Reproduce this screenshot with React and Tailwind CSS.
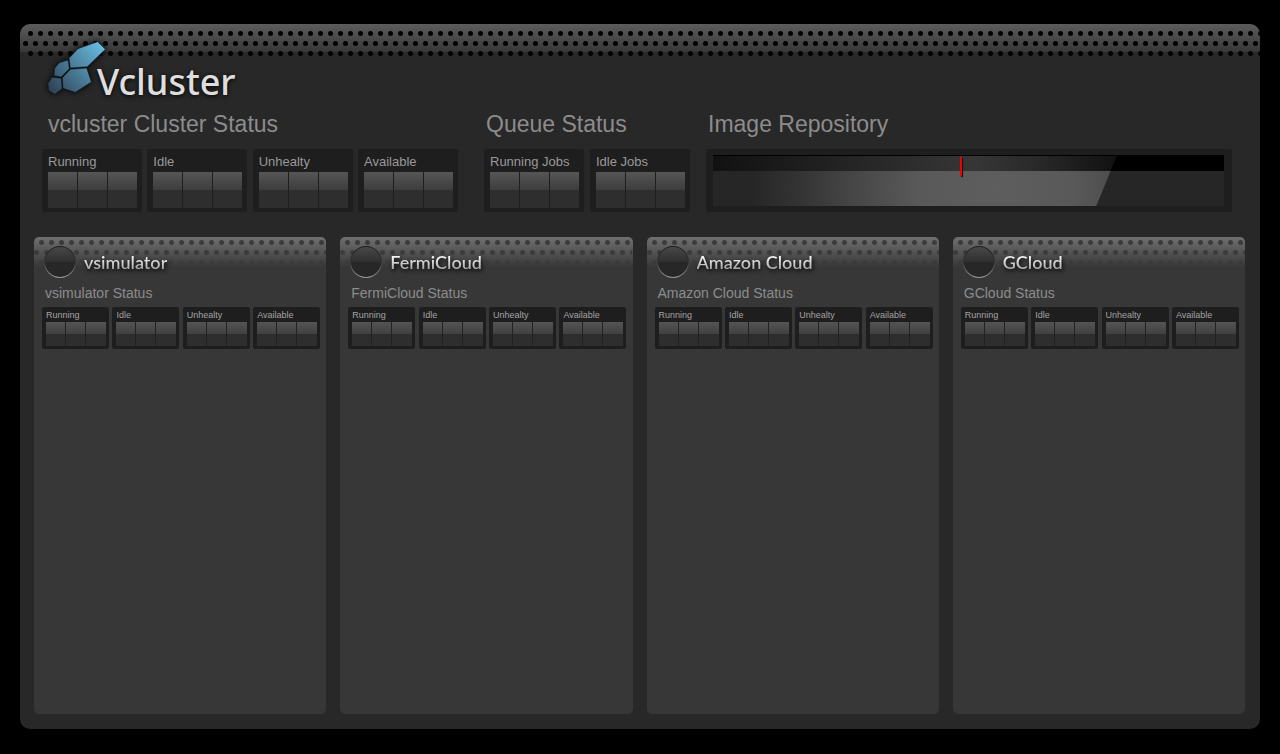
import React, { useId } from "react";

const STATES = ["Running", "Idle", "Unhealty", "Available"];
const CLOUDS = ["vsimulator", "FermiCloud", "Amazon Cloud", "GCloud"];

function FramePerforation() {
  const id = useId();
  return (
    <svg className="absolute inset-x-0 top-0 h-9 w-full" aria-hidden="true">
      <defs>
        <pattern id={id} y="5" width="10" height="20" patternUnits="userSpaceOnUse">
          <circle cx="0.5" cy="4.5" r="2.5" />
          <circle cx="10.5" cy="4.5" r="2.5" />
          <circle cx="5.5" cy="14.5" r="2.5" />
        </pattern>
      </defs>
      <rect x="5" y="5" width="100%" height="29" fill={`url(#${id})`} />
      <circle cx="5.5" cy="19.5" r="2.5" />
    </svg>
  );
}

function CardPerforation() {
  const id = useId();
  return (
    <svg className="absolute inset-x-0 top-0 h-8 w-full" aria-hidden="true">
      <defs>
        <pattern id={id} width="10" height="20" patternUnits="userSpaceOnUse">
          <circle cx="7.5" cy="5.5" r="2.5" fill="#3b3b3b" />
          <circle cx="2.5" cy="15.5" r="2.5" fill="#3b3b3b" />
        </pattern>
      </defs>
      <rect width="100%" height="28" fill={`url(#${id})`} />
    </svg>
  );
}

function Logo() {
  return (
    <h1 className="relative flex h-16 items-start pl-[27px]">
      <svg
        viewBox="110 75 180 168"
        className="h-14 w-[60px] overflow-visible drop-shadow-[0_0_3px_#000]"
        aria-hidden="true"
      >
        <defs>
          <linearGradient id="cells" gradientUnits="userSpaceOnUse" x1="115" y1="235" x2="280" y2="95">
            <stop offset="0" stopColor="#2d3b52" />
            <stop offset="0.45" stopColor="#477690" />
            <stop offset="1" stopColor="#68bce2" />
          </linearGradient>
        </defs>
        <g fill="url(#cells)" stroke="#10181f" strokeWidth="1.5">
          <path d="M176 130 203 101 262 80 285 103 231 155 180 159Z" />
          <path d="M147 143 173 135 177 161 153 186 131 182 133 160Z" />
          <path d="M126 187 153 190 155 221 133 238 115 226 113 205Z" />
          <path d="M180 163 229 159 243 201 195 232 158 220 156 188Z" />
        </g>
      </svg>
      <span className="-ml-[10px] mt-4 font-['Noto_Sans','Open_Sans',sans-serif] text-[36px] font-medium leading-[52px] text-[#dedede] [text-shadow:0_1px_5px_#000]">
        Vcluster
      </span>
    </h1>
  );
}

function Tile({ label }) {
  return (
    <div className="w-[100px] rounded-[3px] bg-[#1e1e1e] pb-1 pl-[6px] pr-[5px] pt-[3px]">
      <div className="h-5 text-[13px] leading-[19px] text-[#999]">{label}</div>
      <div className="grid h-9 grid-cols-3 gap-px">
        {[0, 1, 2].map((i) => (
          <span key={i} className="bg-[linear-gradient(#565656,#3d3d3d_50%,#2e2e2e_50%)]" />
        ))}
      </div>
    </div>
  );
}

function SmallTile({ label }) {
  return (
    <div className="w-[67px] rounded-[2px] bg-[#1e1e1e] pb-[3px] pl-1 pr-[3px] pt-[2px]">
      <div className="h-[13px] text-[9px] leading-3 text-[#a3a3a3]">{label}</div>
      <div className="grid h-6 grid-cols-3 divide-x divide-[#222]">
        {[0, 1, 2].map((i) => (
          <span key={i} className="bg-[linear-gradient(#545454,#404040_50%,#2e2e2e_50%)]" />
        ))}
      </div>
    </div>
  );
}

function Section({ title, className, children }) {
  return (
    <section className={className}>
      <h2 className="h-[41px] whitespace-nowrap text-[23px] leading-8 text-[#8c8c8c]">{title}</h2>
      {children}
    </section>
  );
}

function Gauge() {
  return (
    <div className="h-[63px] rounded-[3px] bg-[#1e1e1e] py-[6px] pl-[7px] pr-2">
      <div className="relative h-full border-t border-black bg-[linear-gradient(#000_15px,#262626_15px)]">
        <div className="flex h-full flex-col [clip-path:polygon(0_0,79%_0,75%_100%,0_100%)]">
          <div className="h-[15px] w-[79%] bg-[linear-gradient(90deg,#111,#363636_65%,#292929_80%,#111)]" />
          <div className="w-[79%] flex-1 bg-[radial-gradient(ellipse_245px_150px_at_70%_50%,#5e5e5e,#595959_32%,#454545_60%,#343434_80%,#262626)]" />
        </div>
        <span className="absolute left-[48%] top-px ml-[2px] h-[19px] w-[2px] bg-[#f00000] shadow-[1px_1px_1px_#111]" />
      </div>
    </div>
  );
}

function CloudCard({ name }) {
  return (
    <article className="relative overflow-hidden rounded-[5px] bg-[#373737] bg-[linear-gradient(#707070,#373737_30px)] pl-2 pr-[6px] pt-[9px]">
      <CardPerforation />
      <header className="relative flex h-8 items-center gap-2 pl-[2px]">
        <span className="size-8 rounded-full bg-[linear-gradient(#1c1c1c,#333_50%,#999)] p-px">
          <span className="block size-full rounded-full bg-[linear-gradient(#484848,#2f2f2f_50%,#272727_50%)]" />
        </span>
        <h2 className="pt-[2px] drop-shadow-[1px_2px_2px_#000]">
          <span className="bg-[linear-gradient(#f4f4f4_30%,#a0a0a0_85%)] bg-clip-text font-[Lato,'Open_Sans',sans-serif] text-[18px] font-semibold leading-6 text-transparent">
            {name}
          </span>
        </h2>
      </header>
      <h3 className="relative mt-[6px] h-[23px] pl-[3px] text-[14px] leading-[18px] text-[#8c8c8c]">{name} Status</h3>
      <div className="flex justify-between">
        {STATES.map((s) => (
          <SmallTile key={s} label={s} />
        ))}
      </div>
    </article>
  );
}

export default function App() {
  return (
    <div className="flex min-h-screen flex-col bg-black px-5 pb-[25px] pt-6 font-['Liberation_Sans',Arial,sans-serif]">
      <main className="relative flex flex-1 flex-col overflow-hidden rounded-[10px] bg-[#282828] bg-[linear-gradient(#5c5c5c,#373737_28px,#282828_28px)] pt-4">
        <FramePerforation />
        <Logo />
        <div className="mt-1 flex pl-[22px] pr-7">
          <Section title={<span className="pl-[6px]">vcluster Cluster Status</span>} className="w-[416px]">
            <div className="flex justify-between">
              {STATES.map((s) => (
                <Tile key={s} label={s} />
              ))}
            </div>
          </Section>
          <Section title={<span className="pl-[2px]">Queue Status</span>} className="ml-[26px] w-[206px]">
            <div className="flex justify-between">
              <Tile label="Running Jobs" />
              <Tile label="Idle Jobs" />
            </div>
          </Section>
          <Section title={<span className="pl-[2px]">Image Repository</span>} className="ml-4 flex-1">
            <Gauge />
          </Section>
        </div>
        <div className="mt-[25px] grid flex-1 grid-cols-4 gap-[14px] pb-[15px] pl-[14px] pr-[15px]">
          {CLOUDS.map((c) => (
            <CloudCard key={c} name={c} />
          ))}
        </div>
      </main>
    </div>
  );
}
